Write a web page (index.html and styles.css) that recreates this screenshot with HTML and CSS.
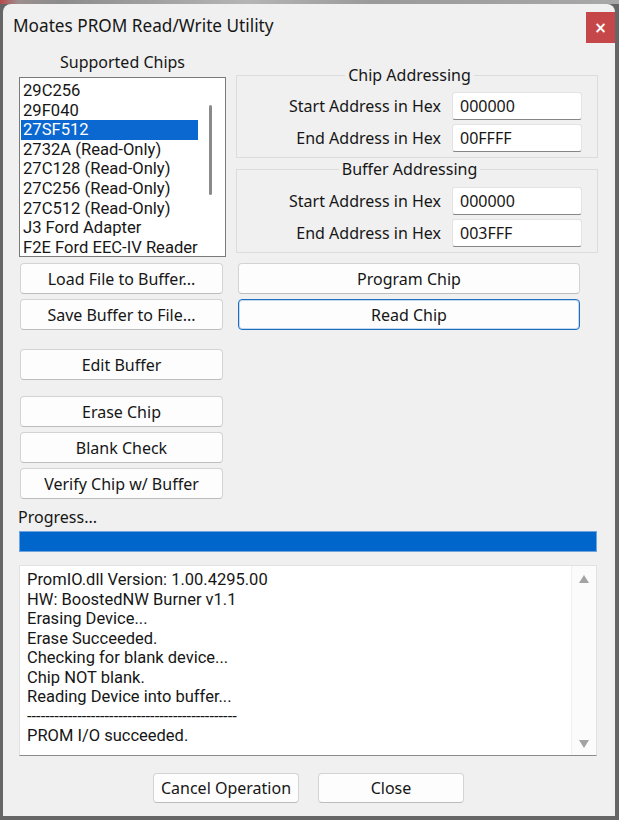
FILE: index.html
```html
<!DOCTYPE html>
<html lang="en">
<head>
    <meta charset="UTF-8">
    <meta name="viewport" content="width=device-width, initial-scale=1.0">
    <title>Moates PROM Read/Write Utility</title>
    <link rel="stylesheet" href="styles.css">
</head>
<body>
    <div class="desktop-strip"></div>
    <div class="window">
        <div class="titlebar">
            <span class="title">Moates PROM Read/Write Utility</span>
            <button class="close-btn">&times;</button>
        </div>

        <div class="content">
            <div class="top">
                <div class="chips">
                    <div class="chips-label">Supported Chips</div>
                    <div class="listbox">
                        <ul class="chip-list">
                            <li>29C256</li>
                            <li>29F040</li>
                            <li class="selected">27SF512</li>
                            <li>2732A (Read-Only)</li>
                            <li>27C128 (Read-Only)</li>
                            <li>27C256 (Read-Only)</li>
                            <li>27C512 (Read-Only)</li>
                            <li>J3 Ford Adapter</li>
                            <li>F2E Ford EEC-IV Reader</li>
                        </ul>
                        <div class="list-scroll"><div class="thumb"></div></div>
                    </div>
                </div>

                <div class="addressing">
                    <fieldset class="group chip-group">
                        <legend>Chip Addressing</legend>
                        <label for="chipStart">Start Address in Hex</label>
                        <input id="chipStart" class="hex" value="000000" readonly>
                        <label for="chipEnd">End Address in Hex</label>
                        <input id="chipEnd" class="hex" value="00FFFF" readonly>
                    </fieldset>
                    <fieldset class="group buffer-group">
                        <legend>Buffer Addressing</legend>
                        <label for="bufStart">Start Address in Hex</label>
                        <input id="bufStart" class="hex" value="000000" readonly>
                        <label for="bufEnd">End Address in Hex</label>
                        <input id="bufEnd" class="hex" value="003FFF" readonly>
                    </fieldset>
                </div>
            </div>

            <div class="actions">
                <div class="left-buttons">
                    <button class="btn">Load File to Buffer...</button>
                    <button class="btn">Save Buffer to File...</button>
                    <button class="btn spaced">Edit Buffer</button>
                    <button class="btn spaced-sm">Erase Chip</button>
                    <button class="btn">Blank Check</button>
                    <button class="btn">Verify Chip w/ Buffer</button>
                </div>
                <div class="right-buttons">
                    <button class="btn">Program Chip</button>
                    <button class="btn default">Read Chip</button>
                </div>
            </div>

            <div class="progress-label">Progress...</div>
            <div class="progress"></div>

            <div class="log">
                <div class="log-text">
                    <div>PromIO.dll Version: 1.00.4295.00</div>
                    <div>HW: BoostedNW Burner v1.1</div>
                    <div>Erasing Device...</div>
                    <div>Erase Succeeded.</div>
                    <div>Checking for blank device...</div>
                    <div>Chip NOT blank.</div>
                    <div>Reading Device into buffer...</div>
                    <div>----------------------------------------------</div>
                    <div>PROM I/O succeeded.</div>
                </div>
                <div class="log-scroll">
                    <svg width="12" height="10" viewBox="0 0 12 10"><polygon points="6,1 11,9 1,9" fill="#a3a3a3"/></svg>
                    <svg width="12" height="10" viewBox="0 0 12 10"><polygon points="1,1 11,1 6,9" fill="#a3a3a3"/></svg>
                </div>
            </div>

            <div class="footer">
                <button class="btn footer-btn">Cancel Operation</button>
                <button class="btn footer-btn">Close</button>
            </div>
        </div>
    </div>
</body>
</html>
```

FILE: styles.css
```css
body {
    margin: 0;
    height: 820px;
    overflow: hidden;
    background: #666666;
    font-family: 'Noto Sans', 'Open Sans', sans-serif;
    color: #161616;
}

.desktop-strip {
    height: 4px;
    background: linear-gradient(90deg, #b84a4a 0%, #9c8f8f 3%, #8c8c8c 10%, #b5b5b5 40%, #9a9a9a 60%, #a8a8a8 100%);
}

.window {
    margin: 0 4px 0 3px;
    height: 812px;
    background: #f0f0f0;
    border-radius: 8px 8px 0 0;
}

.titlebar {
    height: 48px;
    display: flex;
    align-items: flex-start;
}

.title {
    margin: 11px 0 0 10px;
    font-size: 17.2px;
    line-height: 22px;
    color: #161616;
}

.close-btn {
    margin: 8px 0 0 auto;
    width: 29px;
    height: 31px;
    border: none;
    padding: 0;
    background: #c6474a;
    color: #ffffff;
    font-family: 'DejaVu Sans', sans-serif;
    font-size: 15px;
    font-weight: bold;
}

.content {
    padding: 0 17px 0 16px;
}

.top {
    display: flex;
}

.chips {
    width: 207px;
}

.chips-label {
    text-align: center;
    font-size: 16px;
    line-height: 20px;
}

.listbox {
    margin-top: 5px;
    height: 180px;
    box-sizing: border-box;
    border: 1px solid #7a7a7a;
    background: #ffffff;
    display: flex;
    overflow: hidden;
}

.chip-list {
    list-style: none;
    margin: 0;
    padding: 3px 0 0 1px;
    width: 177px;
    overflow: hidden;
    font-family: Roboto, 'Noto Sans', sans-serif;
}

.chip-list li {
    font-size: 16.6px;
    line-height: 19.6px;
    padding-left: 2px;
    white-space: nowrap;
}

.chip-list li.selected {
    background: #0b68d0;
    color: #ffffff;
}

.list-scroll {
    flex: 1;
}

.thumb {
    width: 3px;
    height: 90px;
    margin: 27px 0 0 11px;
    border-radius: 2px;
    background: #8a8a8a;
}

.addressing {
    margin-left: 10px;
    width: 362px;
}

.group {
    margin: 1px 0 0;
    padding: 8px 15px 5px 0;
    border: 1px solid #dcdcdc;
    display: grid;
    grid-template-columns: 1fr 130px;
    column-gap: 11px;
    row-gap: 4px;
    align-items: center;
    min-width: 0;
}

.chip-group {
    margin-top: 13px;
    padding-top: 7px;
}

.group legend {
    margin: 0 auto;
    padding: 0 3px;
    font-size: 16px;
    line-height: 20px;
}

.group label {
    text-align: right;
    font-size: 16px;
}

.hex {
    height: 28px;
    box-sizing: border-box;
    border: 1px solid #e3e3e3;
    border-bottom-color: #868686;
    border-radius: 3px;
    padding: 0 7px;
    background: #ffffff;
    font-family: 'Noto Sans', 'Open Sans', sans-serif;
    font-size: 16px;
    color: #161616;
    outline: none;
}

.actions {
    display: flex;
    margin-top: 6px;
}

.left-buttons {
    display: flex;
    flex-direction: column;
    gap: 5px;
    width: 203px;
    margin-left: 1px;
}

.right-buttons {
    display: flex;
    flex-direction: column;
    gap: 5px;
    width: 342px;
    margin-left: 15px;
}

.btn {
    height: 31px;
    box-sizing: border-box;
    border: 1px solid #d3d3d3;
    border-bottom-color: #bdbdbd;
    border-radius: 4px;
    background: #fdfdfd;
    padding: 0;
    font-family: 'Noto Sans', 'Open Sans', sans-serif;
    font-size: 16px;
    color: #161616;
}

.btn.spaced {
    margin-top: 14px;
}

.btn.spaced-sm {
    margin-top: 11px;
}

.btn.default {
    border-color: #1a6ec4;
    box-shadow: inset 0 0 0 1px rgba(26, 110, 196, 0.25);
}

.progress-label {
    margin: 9px 0 0 -1px;
    font-size: 16px;
    line-height: 18px;
}

.progress {
    margin: 5px 1px 0 0;
    height: 21px;
    box-sizing: border-box;
    border: 1px solid #6ea3dc;
    background: #0066cc;
}

.log {
    margin: 13px 1px 0 0;
    height: 191px;
    box-sizing: border-box;
    display: flex;
    background: #ffffff;
    border: 1px solid #e2e2e2;
    border-bottom-color: #8a8a8a;
}

.log-text {
    flex: 1;
    padding: 4px 0 0 7px;
    font-family: Roboto, 'Noto Sans', sans-serif;
    font-size: 16.5px;
    line-height: 19.5px;
    white-space: nowrap;
}

.log-scroll {
    width: 25px;
    display: flex;
    flex-direction: column;
    justify-content: space-between;
    align-items: center;
    padding: 8px 0 6px;
    box-sizing: border-box;
    background: #fbfbfb;
    border-left: 1px solid #f0f0f0;
}

.footer {
    display: flex;
    justify-content: center;
    gap: 19px;
    margin-top: 17px;
}

.footer-btn {
    width: 146px;
    height: 30px;
}
```
